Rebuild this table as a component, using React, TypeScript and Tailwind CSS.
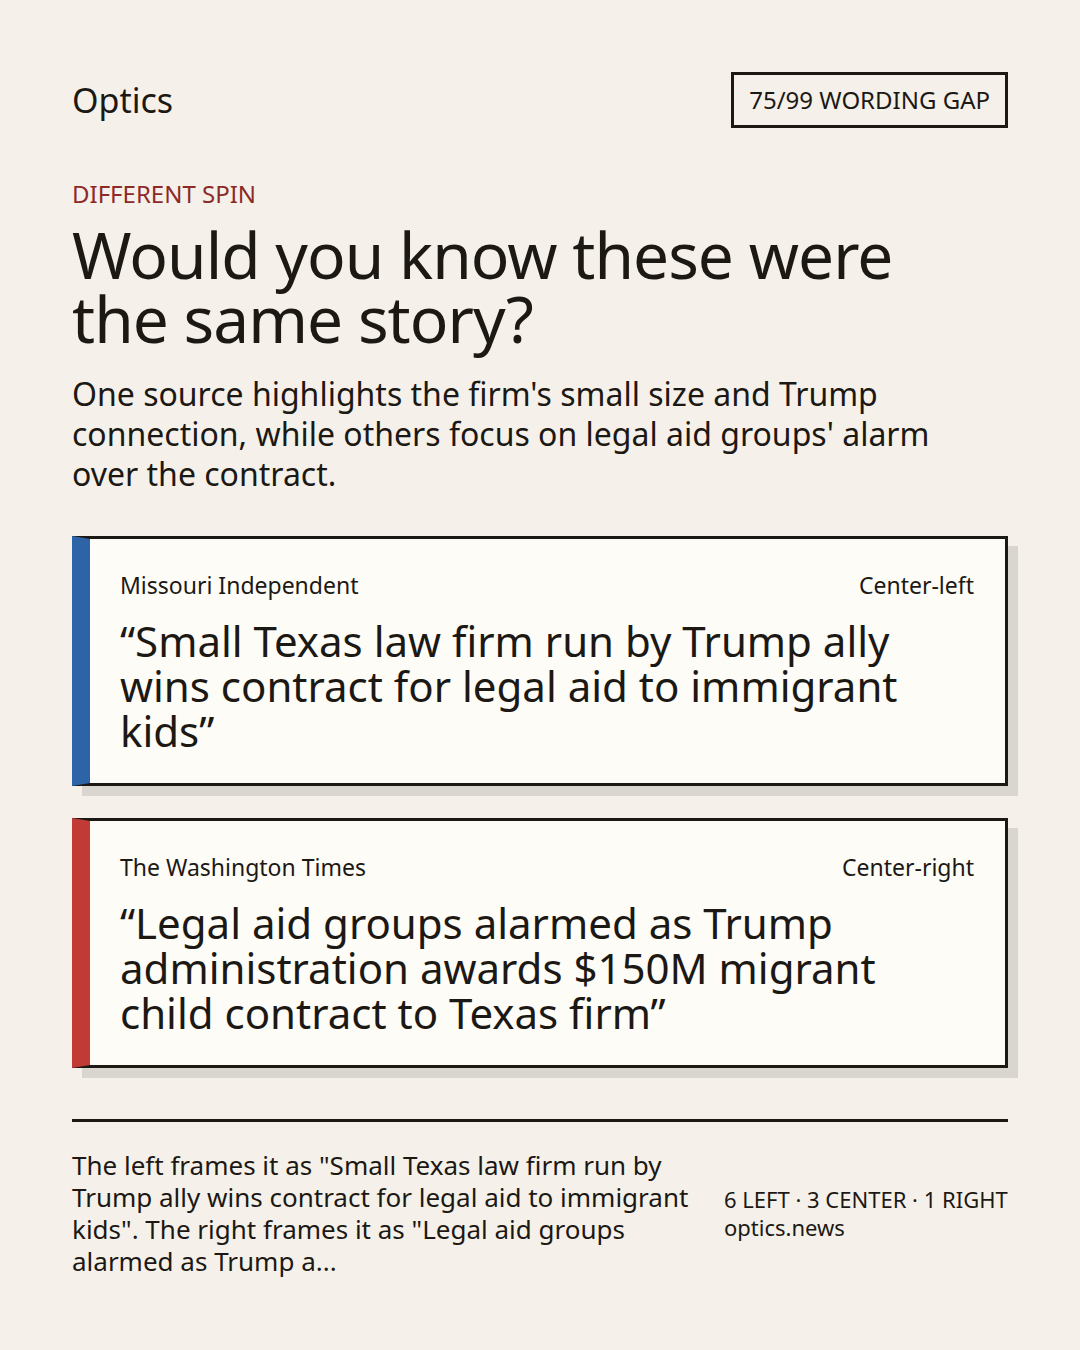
export default function App() {
  const cards = [
    {
      source: 'Missouri Independent',
      lean: 'Center-left',
      bar: 'border-l-[#2d64a8]',
      headline: '“Small Texas law firm run by Trump ally wins contract for legal aid to immigrant kids”',
    },
    {
      source: 'The Washington Times',
      lean: 'Center-right',
      bar: 'border-l-[#c13a36]',
      headline: '“Legal aid groups alarmed as Trump administration awards $150M migrant child contract to Texas firm”',
    },
  ]

  return (
    <div
      className="w-[1080px] h-[1350px] bg-[#f5f1ea] text-[#1c1814] px-[72px] pt-[72px]"
      style={{ fontFamily: '"Noto Sans", "Open Sans", sans-serif' }}
    >
      <div className="flex items-center justify-between">
        <span className="text-[34px] leading-[40px]">Optics</span>
        <span className="border-[3px] border-[#1c1814] px-[15px] py-[9px] text-[24px] leading-[32px]">
          75/99 WORDING GAP
        </span>
      </div>

      <p className="mt-[50px] text-[24px] leading-[32px] text-[#8c2a28]">DIFFERENT SPIN</p>
      <h1 className="mt-[13px] max-w-[880px] text-[64px] leading-[64px] tracking-[-0.015em]">
        Would you know these were the same story?
      </h1>
      <p className="mt-[23px] max-w-[900px] text-[32px] leading-[40px]">
        One source highlights the firm's small size and Trump connection, while others focus on legal aid groups' alarm over the contract.
      </p>

      <div className="mt-[42px] flex flex-col gap-[32px]">
        {cards.map((card) => (
          <div
            key={card.source}
            className={`bg-[#fdfcf7] border-[3px] border-[#1c1814] border-l-[18px] ${card.bar} shadow-[10px_10px_0_#d9d6cf] pl-[30px] pr-[31px] pt-[32px] pb-[30px]`}
          >
            <div className="flex justify-between text-[23px] leading-[28px]">
              <span>{card.source}</span>
              <span>{card.lean}</span>
            </div>
            <p className="mt-[19px] text-[42px] leading-[45px] pr-12">{card.headline}</p>
          </div>
        ))}
      </div>

      <div className="mt-[51px] border-t-[3px] border-[#1c1814] pt-[27px] flex items-center gap-8">
        <p className="w-[620px] text-[26px] leading-[32px]">
          The left frames it as "Small Texas law firm run by Trump ally wins contract for legal aid to immigrant kids". The right frames it as "Legal aid groups alarmed as Trump a...
        </p>
        <div className="text-[22px] leading-[28px]">
          <p>6 LEFT · 3 CENTER · 1 RIGHT</p>
          <p>optics.news</p>
        </div>
      </div>
    </div>
  )
}
